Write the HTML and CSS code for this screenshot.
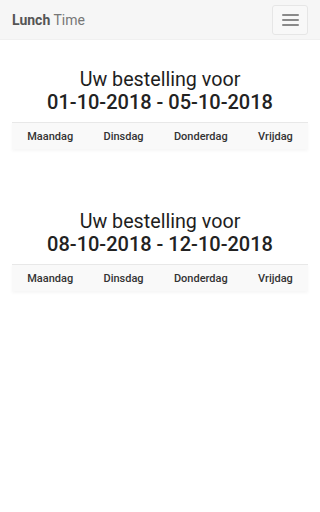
FILE: index.html
```html
<!DOCTYPE html>
<html lang="nl">
<head>
<meta charset="utf-8">
<title>Lunch Time</title>
<link rel="stylesheet" href="styles.css">
</head>
<body>
<nav class="navbar">
  <a class="brand"><b>Lunch</b> Time</a>
  <button class="toggle" aria-label="menu">
    <span class="bar"></span><span class="bar"></span><span class="bar"></span>
  </button>
</nav>
<main>
  <section class="week">
    <h2 class="title">Uw bestelling voor<br><span class="dates">01-10-2018 - 05-10-2018</span></h2>
    <ul class="tabs">
      <li>Maandag</li><li>Dinsdag</li><li>Donderdag</li><li>Vrijdag</li>
    </ul>
  </section>
  <section class="week">
    <h2 class="title">Uw bestelling voor<br><span class="dates">08-10-2018 - 12-10-2018</span></h2>
    <ul class="tabs">
      <li>Maandag</li><li>Dinsdag</li><li>Donderdag</li><li>Vrijdag</li>
    </ul>
  </section>
</main>
</body>
</html>
```
FILE: styles.css
```css
html, body {
  margin: 0;
  padding: 0;
  background: #fff;
  font-family: Roboto, "Noto Sans", sans-serif;
}
.navbar {
  height: 40px;
  box-sizing: border-box;
  background: #f6f6f6;
  border-bottom: 1px solid #f0f0f0;
  display: flex;
  align-items: center;
  justify-content: space-between;
  padding: 0 12px 0 12px;
}
.brand {
  font-size: 14px;
  color: #777;
}
.brand b {
  color: #555;
  font-weight: 700;
}
.toggle {
  width: 36px;
  height: 30px;
  margin-top: 1px;
  box-sizing: border-box;
  border: 1px solid #e6e6e6;
  border-radius: 3px;
  background: #f8f8f8;
  display: flex;
  flex-direction: column;
  align-items: center;
  justify-content: center;
  gap: 3px;
  padding: 0;
}
.bar {
  display: block;
  width: 17px;
  height: 2px;
  background: #8a8a8a;
  border-radius: 1px;
}
main {
  padding: 0 12px;
}
.week {
  padding-top: 29px;
  height: 142px;
  box-sizing: border-box;
}
.title {
  margin: 0;
  text-align: center;
  font-size: 19.7px;
  font-weight: 400;
  line-height: 22px;
  color: #1e1e1e;
}
.dates {
  font-size: 20px;
  font-weight: 500;
  color: #222;
}
.tabs {
  list-style: none;
  margin: 8px 0 0;
  padding: 0;
  height: 27px;
  display: flex;
  justify-content: space-around;
  align-items: center;
  background: #f9f9f9;
  border-top: 1px solid #e8e8e8;
  box-shadow: 0 2px 3px rgba(0,0,0,0.04);
  box-sizing: border-box;
}
.tabs li {
  font-size: 11px;
  font-weight: 500;
  color: #333;
  padding-top: 1px;
}
```
